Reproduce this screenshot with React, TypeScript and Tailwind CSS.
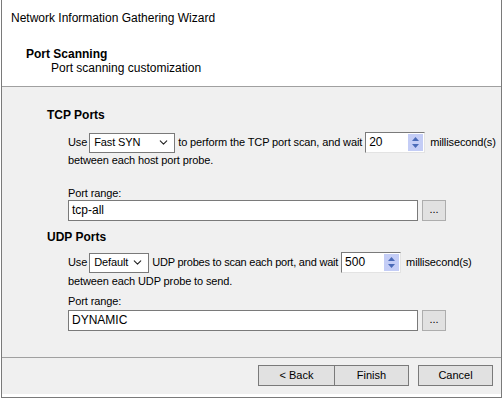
import { ChevronDown } from "lucide-react";

const font = "font-['Tahoma','Liberation_Sans',sans-serif]";

const Select = ({ value, width }: { value: string; width: string }) => (
  <div
    className={`${width} h-[20px] border border-[#7a7a7a] bg-white flex items-center justify-between pl-[4px] pr-[4px]`}
  >
    <span>{value}</span>
    <ChevronDown size={13} strokeWidth={2} className="text-[#222]" />
  </div>
);

const Spin = ({ value }: { value: string }) => (
  <div className="w-[60px] h-[21px] border border-[#7a7a7a] border-r-[#e3e3e3] border-b-[#e3e3e3] bg-white flex items-stretch">
    <span className="flex-1 pl-[3px] text-[12px] leading-[18px] tracking-normal">{value}</span>
    <div className="w-[15px] my-[1px] mr-[1px] bg-[#c4cdf6] flex flex-col items-center justify-center gap-[3px]">
      <svg width="7" height="4" viewBox="0 0 7 4">
        <path d="M0 4 L3.5 0 L7 4 Z" fill="#4a6ab8" />
      </svg>
      <svg width="7" height="4" viewBox="0 0 7 4">
        <path d="M0 0 L3.5 4 L7 0 Z" fill="#4a6ab8" />
      </svg>
    </div>
  </div>
);

const RangeRow = ({ value }: { value: string }) => (
  <div className="flex items-center gap-[4px]">
    <div className="w-[350px] h-[21px] border border-[#7a7a7a] bg-white pl-[3px] text-[12px] leading-[19px] tracking-normal font-['Liberation_Sans',sans-serif]">
      {value}
    </div>
    <div className="w-[24px] h-[21px] border border-[#adadad] bg-[#e1e1e1] flex items-center justify-center text-[11px] leading-none pb-[2px]">
      ...
    </div>
  </div>
);

const Button = ({ label, className = "" }: { label: string; className?: string }) => (
  <div
    className={`w-[75px] h-[21px] border border-[#7a7a7a] bg-[#e1e1e1] flex items-center justify-center ${className}`}
  >
    {label}
  </div>
);

export default function App() {
  return (
    <div className={`w-[504px] h-[400px] bg-white text-[11px] text-black ${font}`}>
      <div className="w-[501px] h-[398px] ml-[1px] border-l border-r border-b border-[#7a7a7a] flex flex-col">
        {/* header */}
        <div className="h-[87px] bg-white border-b border-[#a0a0a0] pl-[9px]">
          <p className="pt-[10px] text-[12px] leading-[16px]">Network Information Gathering Wizard</p>
          <p className="mt-[21px] pl-[15px] font-bold text-[12px] leading-[14px]">Port Scanning</p>
          <p className="pl-[40px] text-[12px] leading-[14px]">Port scanning customization</p>
        </div>

        {/* body */}
        <div className="h-[271px] bg-[#f0f0f0] pl-[45px] border-b border-[#a0a0a0] whitespace-nowrap tracking-[-0.12px]">
          <p className="mt-[21px] font-bold text-[12px] leading-[14px] tracking-normal">TCP Ports</p>
          <div className="pl-[21px]">
            <div className="mt-[10px] flex items-center gap-[3px] h-[21px]">
              <span className="-mr-[1px]">Use</span>
              <Select value="Fast SYN" width="w-[86px]" />
              <span>to perform the TCP port scan, and wait</span>
              <Spin value="20" />
              <span className="ml-[2px]">millisecond(s)</span>
            </div>
            <p className="leading-[14px]">between each host port probe.</p>
            <p className="mt-[19px] leading-[14px]">Port range:</p>
            <RangeRow value="tcp-all" />
          </div>

          <p className="mt-[9px] font-bold text-[12px] leading-[14px] tracking-normal">UDP Ports</p>
          <div className="pl-[21px]">
            <div className="mt-[8px] flex items-center gap-[3px] h-[21px]">
              <span className="-mr-[1px]">Use</span>
              <Select value="Default" width="w-[60px]" />
              <span className="tracking-[-0.22px]">UDP probes to scan each port, and wait</span>
              <Spin value="500" />
              <span className="ml-[2px]">millisecond(s)</span>
            </div>
            <p className="leading-[14px] mt-[1px]">between each UDP probe to send.</p>
            <p className="mt-[6px] leading-[14px]">Port range:</p>
            <div className="mt-[2px]">
              <RangeRow value="DYNAMIC" />
            </div>
          </div>
        </div>

        {/* footer */}
        <div className="flex-1 bg-[#f0f0f0] flex items-start justify-end pr-[8px] pt-[7px] border-b-[3px] border-white">
          <Button label="< Back" className="w-[77px]" />
          <Button label="Finish" className="-ml-[1px]" />
          <Button label="Cancel" className="ml-[9px]" />
        </div>
      </div>
    </div>
  );
}
